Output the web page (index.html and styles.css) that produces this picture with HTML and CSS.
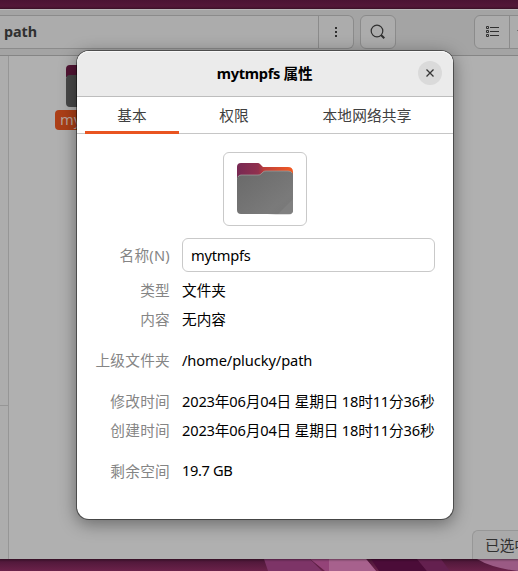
FILE: index.html
```
<!DOCTYPE html>
<html lang="zh-CN">
<head>
<meta charset="utf-8">
<title>mytmpfs 属性</title>
<link rel="stylesheet" href="styles.css">
</head>
<body>
<div class="desktop">
  <svg class="wallpaper" width="518" height="12" viewBox="0 0 518 12">
    <path fill="#7d3467" d="M264 0h46l12 12h-54z"/>
    <path fill="#944378" d="M310 0h56l10 12h-51z"/>
    <path fill="#a7618d" d="M329 0h37l10 12h-47z"/>
    <path fill="#4b0c38" d="M371 0h46l10 12h-48z"/>
    <path fill="#64204f" d="M417 0h24l9 12h-23z"/>
    <path fill="#9a5a84" d="M477 0h41v12q-26-3-41-12z"/>
  </svg>
  <div class="window">
    <header class="toolbar">
      <div class="pathbar">
        <span class="crumb">path</span>
        <span class="menu"><svg width="4" height="12" viewBox="0 0 4 12"><path fill="#303030" d="M1 1h2v2H1zM1 5h2v2H1zM1 9h2v2H1z"/></svg></span>
      </div>
      <div class="button search"><svg width="16" height="16" viewBox="0 0 16 16" fill="none" stroke="#303030"><circle cx="7" cy="7" r="5.8" stroke-width="1.2"/><path stroke-width="2" d="M11 11l3.3 3.3"/></svg></div>
      <div class="button view">
        <span class="list"><svg width="13" height="12" viewBox="0 0 13 12" fill="none" stroke="#303030"><path d="M.5.5h2v2h-2zM.5 4.5h2v2h-2zM.5 8.5h2v2h-2zM4 1.5h9M4 5.5h9M4 9.5h9"/></svg></span>
        <span class="arrow"><svg width="10" height="6" viewBox="0 0 10 6" fill="#303030"><path d="M0 1h10L5 6z"/></svg></span>
      </div>
    </header>
    <div class="content">
      <aside class="sidebar"><div class="places"></div></aside>
      <main class="files">
        <div class="file">
          <svg width="56" height="43" viewBox="0 0 56 43"><path fill="#521534" d="M0 12V4q0-4 4-4h17l5 4h26q4 0 4 4v8z"/><path fill="#484848" d="M0 14q0-4 4-4h20l3-3h29v31q0 4-4 4H4q-4 0-4-4z"/></svg>
          <span class="filename">mytmpfs</span>
        </div>
        <div class="status">已选中“mytmpfs”</div>
      </main>
    </div>
  </div>
  <section class="dialog">
    <header class="titlebar">
      <h1>mytmpfs 属性</h1>
      <div class="close"><svg width="8" height="8" viewBox="0 0 8 8" stroke="#363636" stroke-width="1.3"><path d="M.5.5l7 7M7.500.5l-7 7"/></svg></div>
    </header>
    <nav class="tabs">
      <span class="tab active">基本</span>
      <span class="tab second">权限</span>
      <span class="tab third">本地网络共享</span>
    </nav>
    <div class="icon-button">
      <svg width="58" height="54" viewBox="0 0 58 54">
        <defs>
          <linearGradient id="tab" x1="0" x2="1"><stop offset="0" stop-color="#772953"/><stop offset=".38" stop-color="#91304e"/><stop offset=".48" stop-color="#bd3e3a"/><stop offset="1" stop-color="#f35b22"/></linearGradient>
          <linearGradient id="front" x1="0" y1="0" x2="1" y2="1"><stop offset="0" stop-color="#696969"/><stop offset=".75" stop-color="#7a7a7a"/><stop offset="1" stop-color="#777"/></linearGradient>
        </defs>
        <path fill="#ddd" d="M4 49h49q4 0 4-5v4q0 5-5 5H40z"/>
        <path fill="url(#tab)" d="M1 16V5q0-4 4-4h17q1 0 2 1l3 3h25q5 0 5 5v6z"/>
        <path fill="url(#front)" d="M1 17q0-4 4-4h17q2 0 3-1l2-2q1-1 3-1h22q5 0 5 4v35q0 4-4 4H5q-4 0-4-4z"/>
        <path fill="#808080" d="M57 37v11q0 4-4 4H42z"/>
        <path fill="none" stroke="#a2a2a2" stroke-width=".7" d="M2 15q1-2 3-2h17q2 0 3-1l2-2q1-1 3-1h22q3 0 4 2"/>
      </svg>
    </div>
    <dl class="properties">
      <div class="row name"><dt>名称(N)</dt><dd><span class="entry">mytmpfs</span></dd></div>
      <div class="row first"><dt>类型</dt><dd>文件夹</dd></div>
      <div class="row"><dt>内容</dt><dd>无内容</dd></div>
      <div class="row spaced"><dt>上级文件夹</dt><dd class="location">/home/plucky/path</dd></div>
      <div class="row spaced"><dt>修改时间</dt><dd class="date">2023年06月04日 星期日 18时11分36秒</dd></div>
      <div class="row"><dt>创建时间</dt><dd class="date">2023年06月04日 星期日 18时11分36秒</dd></div>
      <div class="row spaced"><dt>剩余空间</dt><dd class="space">19.7 GB</dd></div>
    </dl>
  </section>
</div>
</body>
</html>
```
FILE: styles.css
```
* { box-sizing: border-box; }
body { margin: 0; font: 14.67px/20px "Noto Sans", "Noto Sans CJK SC", sans-serif; color: #000; }
.desktop { position: relative; width: 518px; height: 571px; padding-top: 9px; overflow: hidden; background: linear-gradient(#4b1433 0, #571a3a 9px, #571a3a 558px, #4d1738 560px, #6b224a 571px); }
.wallpaper { position: absolute; left: 0; bottom: 0; }
.window { position: relative; display: flex; flex-direction: column; height: 550px; background: #b0b0b0; border-top: 1px solid #b8b8b8; box-shadow: 0 0 2px 1px rgba(0,0,0,.4); }
.toolbar { display: flex; flex: none; height: 46px; padding-top: 5px; background: #a4a4a4; border-bottom: 1px solid #858585; overflow: hidden; }
.pathbar { display: flex; flex: none; width: 354px; height: 34px; border: 1px solid #8b8b8b; border-left: 0; border-radius: 0 6px 6px 0; background: #acacac; }
.crumb { width: 319px; padding: 6px 0 0 4px; color: #303030; font-weight: bold; font-size: 14.4px; letter-spacing: -.1px; border-right: 1px solid #8b8b8b; }
.menu { flex: 1; display: grid; place-items: center; }
.button { flex: none; height: 34px; border: 1px solid #8b8b8b; border-radius: 6px; background: #acacac; }
.search { display: grid; place-items: center; width: 36px; margin-left: 6px; }
.view { display: flex; width: 71px; margin-left: 78px; }
.list { display: grid; place-items: center; width: 35px; border-right: 1px solid #8b8b8b; }
.arrow { padding: 10px 0 0 7px; }
.arrow svg { display: block; margin-top: 3px; }
.content { display: flex; flex: 1; min-height: 0; }
.sidebar { width: 9px; border-right: 1px solid #969696; background: #adadad; }
.places { height: 350px; border-bottom: 1px solid #969696; }
.files { flex: 1; display: flex; flex-direction: column; justify-content: space-between; align-items: flex-start; }
.file { display: flex; flex-direction: column; align-items: center; width: 78px; margin-left: 46px; padding-top: 9px; }
.filename { width: 78px; height: 20px; margin-top: 2px; padding-left: 5px; border-radius: 4px; line-height: 19px; color: #b7a49d; background: #ac3f17; }
.status { align-self: flex-end; width: 46px; height: 29px; padding: 4px 0 0 12px; border: 1px solid #979797; border-width: 1px 0 0 1px; border-radius: 6px 0 0; overflow: hidden; white-space: nowrap; color: #303030; background: #aaa; }
.dialog { position: absolute; left: 77px; top: 51px; width: 376px; height: 468px; border-radius: 12px; background: #fff; box-shadow: 0 0 0 1px rgba(0,0,0,.45), 0 4px 17px 1px rgba(0,0,0,.4); }
.titlebar { position: relative; display: flex; justify-content: center; align-items: center; height: 46px; border-radius: 12px 12px 0 0; border-bottom: 1px solid #bdbdbd; background: #ebebeb; box-shadow: inset 0 1px #f8f8f8; }
h1 { margin: 0; padding: 0 1px 2px 0; font-size: 14.67px; line-height: 20px; letter-spacing: -.33px; }
.close { position: absolute; right: 11px; top: 10px; display: grid; place-items: center; width: 24px; height: 24px; border-radius: 50%; background: #dadada; }
.tabs { display: flex; height: 37px; padding-left: 8px; border-bottom: 1px solid #c6c6c6; color: #404040; }
.tab { height: 37px; line-height: 37px; text-align: center; letter-spacing: .2px; }
.active { width: 94px; border-bottom: 3px solid #e95420; }
.second { width: 110px; }
.third { width: 156px; }
.icon-button { display: grid; place-items: center; width: 84px; height: 74px; margin: 18px auto 0 146px; border: 1px solid #c9c9c9; border-radius: 6px; }
.properties { margin: 12px 0 0; }
.row { display: grid; grid-template-columns: 93px 1fr; gap: 12px; height: 20px; margin-top: 9px; line-height: 20px; white-space: nowrap; }
.name { height: 34px; line-height: 34px; }
.first { margin-top: 8px; }
dt { text-align: right; letter-spacing: .25px; color: #858585; }
dd { margin: 0; }
.entry { display: block; width: 253px; height: 34px; padding-left: 8px; border: 1px solid #c9c9c9; border-radius: 6px; line-height: 33px; letter-spacing: -.25px; }
.spaced { margin-top: 21px; }
.location { letter-spacing: -.1px; }
.date { letter-spacing: -.18px; }
.space { letter-spacing: -.4px; }
.row:last-child dd { line-height: 18px; }
```
